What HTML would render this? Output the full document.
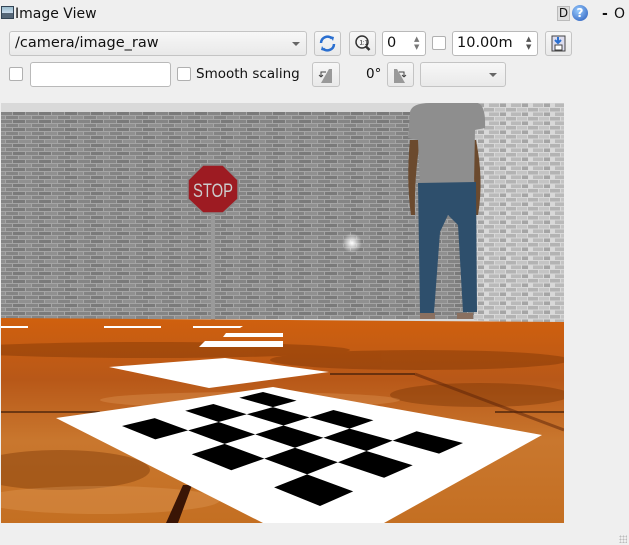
<!DOCTYPE html>
<html><head><meta charset="utf-8"><style>
body{margin:0;width:629px;height:545px;background:#efefef;font-family:"DejaVu Sans","Liberation Sans",sans-serif;position:relative;overflow:hidden;color:#111}
.a{position:absolute;box-sizing:border-box}
.btn{border:1px solid #c4c4c4;border-radius:3px;background:linear-gradient(#f7f7f7,#e9e9e9)}
.fld{border:1px solid #b9b9b9;border-radius:3px;background:#fff}
.cb{width:14px;height:14px;border:1px solid #b0b0b0;border-radius:2px;background:#fff}
.t{font-size:14px;line-height:18px;white-space:nowrap}
</style></head><body>
<div class="a" style="left:1px;top:6px;width:13px;height:13px;border:1px solid #345;background:linear-gradient(#9bc 0,#cde 55%,#567 56%)"></div>
<div class="a t" style="left:15px;top:5px;font-size:14px">Image View</div>
<div class="a" style="left:557px;top:6px;width:13px;height:15px;background:#ddd;border:1px solid #bbb;font-size:12px;line-height:13px;text-align:center">D</div>
<div class="a" style="left:572px;top:5px;width:16px;height:16px;border-radius:50%;background:radial-gradient(circle at 40% 35%,#9cf,#2457b8);color:#fff;font-size:12px;font-weight:bold;line-height:16px;text-align:center">?</div>
<div class="a t" style="left:602px;top:5px;font-size:14px;font-weight:bold">-</div>
<div class="a t" style="left:614px;top:5px;font-size:14px">O</div>
<div class="a btn" style="left:9px;top:31px;width:298px;height:25px"></div>
<div class="a t" style="left:15px;top:34px;font-size:14.5px">/camera/image_raw</div>
<div class="a" style="left:292px;top:42px;width:0;height:0;border-left:4px solid transparent;border-right:4px solid transparent;border-top:4px solid #666"></div>
<div class="a btn" style="left:314px;top:31px;width:27px;height:25px"><svg width="25" height="23"><path d="M6 11a6.5 6.5 0 0 1 11-4.5M19 12a6.5 6.5 0 0 1-11 4.5" fill="none" stroke="#2a6fd0" stroke-width="2.5"/><path d="M15 4l4 1-1 4zM10 19l-4-1 1-4z" fill="#2a6fd0"/></svg></div>
<div class="a btn" style="left:349px;top:31px;width:27px;height:25px"><svg width="25" height="23"><circle cx="12" cy="10" r="6" fill="#f4f4f4" stroke="#333" stroke-width="1.5"/><path d="M15.5 14l4 4" stroke="#333" stroke-width="2.5"/><text x="9.5" y="12.5" font-size="6" font-family="Liberation Sans">1:1</text></svg></div>
<div class="a fld" style="left:382px;top:31px;width:44px;height:25px"></div>
<div class="a t" style="left:387px;top:34px;font-size:14.5px">0</div>
<div class="a" style="left:414px;top:35px;font-size:7px;line-height:8px;color:#777">▲<br>▼</div>
<div class="a cb" style="left:432px;top:36px"></div>
<div class="a fld" style="left:452px;top:31px;width:86px;height:25px"></div>
<div class="a t" style="left:457px;top:34px;font-size:14.5px">10.00m</div>
<div class="a" style="left:526px;top:35px;font-size:7px;line-height:8px;color:#555">▲<br>▼</div>
<div class="a btn" style="left:545px;top:31px;width:27px;height:25px"><svg width="25" height="23"><rect x="6" y="4" width="13" height="15" fill="#dde" stroke="#444"/><rect x="9" y="13" width="7" height="5" fill="#fff" stroke="#444"/><path d="M12 5v6M9 8l3 3 3-3" stroke="#2a6fd0" stroke-width="2" fill="none"/></svg></div>
<div class="a cb" style="left:9px;top:67px"></div>
<div class="a fld" style="left:30px;top:62px;width:141px;height:25px"></div>
<div class="a cb" style="left:177px;top:67px"></div>
<div class="a t" style="left:196px;top:65px;font-size:13.5px">Smooth scaling</div>
<div class="a btn" style="left:312px;top:62px;width:28px;height:25px"><svg width="26" height="23"><path d="M8 20h11V6h-3z" fill="#999"/><path d="M13 9H8v5M8 14l-2-2M8 14l2-2" stroke="#444" fill="none"/></svg></div>
<div class="a t" style="left:366px;top:65px;font-size:13.5px">0°</div>
<div class="a btn" style="left:387px;top:62px;width:27px;height:25px"><svg width="25" height="23"><path d="M6 20h11L9 6H6z" fill="#999"/><path d="M11 9h5v5M16 14l-2-2M16 14l2-2" stroke="#444" fill="none"/></svg></div>
<div class="a btn" style="left:420px;top:62px;width:86px;height:25px"></div>
<div class="a" style="left:489px;top:73px;width:0;height:0;border-left:4px solid transparent;border-right:4px solid transparent;border-top:4px solid #666"></div>
<svg class="a" style="left:1px;top:103px" width="563" height="420" viewBox="1 103 563 420">
<defs>
<pattern id="br" width="26" height="8" patternUnits="userSpaceOnUse">
<rect width="26" height="8" fill="#a5a5a5"/><rect x="0" y="0" width="12" height="3" fill="#858585"/><rect x="13" y="0" width="12" height="3" fill="#7a7a7a"/><rect x="6" y="4" width="12" height="3" fill="#848484"/><rect x="19" y="4" width="7" height="3" fill="#909090"/><rect x="0" y="4" width="5" height="3" fill="#909090"/></pattern>
<pattern id="br2" width="22" height="9" patternUnits="userSpaceOnUse">
<rect width="22" height="9" fill="#d8d8d8"/><rect x="0" y="0" width="10" height="3.5" fill="#b3b3b3"/><rect x="11" y="0" width="10" height="3.5" fill="#c4c4c4"/><rect x="5" y="4.5" width="10" height="3.5" fill="#b9b9b9"/><rect x="16" y="4.5" width="6" height="3.5" fill="#a5a5a5"/></pattern>
<linearGradient id="fl" x1="0" y1="0" x2="0" y2="1"><stop offset="0" stop-color="#d0600e"/><stop offset=".3" stop-color="#b85818"/><stop offset=".6" stop-color="#c9772e"/><stop offset="1" stop-color="#c46f22"/></linearGradient>
<radialGradient id="gl"><stop offset="0" stop-color="#fff"/><stop offset="1" stop-color="#fff" stop-opacity="0"/></radialGradient>
</defs>
<rect x="1" y="103" width="563" height="420" fill="#d9d9d9"/>
<rect x="1" y="112" width="475" height="207" fill="url(#br)"/>
<polygon points="474,103 564,103 564,325 474,320" fill="url(#br2)"/>
<circle cx="352" cy="243" r="10" fill="url(#gl)"/>
<rect x="211" y="212" width="4" height="108" fill="#9a9a9a"/>
<polygon points="203,165 223,165 238,180 238,199 223,213 203,213 188,199 188,180" fill="#9d1b22" stroke="#888" stroke-width="1.5"/>
<text x="213" y="197" font-family="Liberation Sans" font-size="19" fill="#ccc" text-anchor="middle" textLength="40" lengthAdjust="spacingAndGlyphs">STOP</text>
<path d="M410 140 Q406 180 411 215 L415 215 Q414 180 420 140Z" fill="#6b4a2e"/>
<path d="M476 140 Q484 180 478 215 L474 215 Q476 180 470 140Z" fill="#6b4a2e"/>
<path d="M410 112 Q412 103 430 103 L478 103 Q486 106 485 128 L475 130 L474 185 L420 187 L418 140 L408 138Z" fill="#8e8e8e"/>
<path d="M418 183 L476 182 L477 312 L463 312 L458 225 L448 215 L440 232 L434 313 L420 313Z" fill="#2e4f6c"/>
<rect x="420" y="313" width="15" height="6" fill="#8a7060"/><rect x="457" y="313" width="16" height="6" fill="#8a7060"/>
<polygon points="1,318 564,322 564,523 1,523" fill="url(#fl)"/>
<g opacity=".35" fill="#6a2a00">
<ellipse cx="150" cy="350" rx="200" ry="8"/><ellipse cx="420" cy="360" rx="150" ry="10"/><ellipse cx="60" cy="470" rx="90" ry="20"/><ellipse cx="480" cy="395" rx="90" ry="12"/></g>
<g opacity=".25" fill="#f0b070"><ellipse cx="100" cy="500" rx="120" ry="14"/><ellipse cx="250" cy="400" rx="150" ry="8"/></g>
<path d="M1 412H100M495 412H564M330 374H415" stroke="#3a1a08" stroke-width="1.2"/>
<path d="M415 374 L564 430" stroke="#5a2208" stroke-width="3" opacity=".5"/>
<polygon points="183,485 192,485 178,523 166,523" fill="#3a1505"/>
<polygon points="1,326 28,326 28,328 1,328" fill="#fff"/>
<polygon points="104,326 161,326 161,328 104,328" fill="#fff"/>
<polygon points="193,326 243,326 240,328 193,328" fill="#fff"/>
<polygon points="226,333 283,333 283,337 223,337" fill="#fff"/>
<polygon points="205,341 283,341 283,347 199,347" fill="#fff"/>
<polygon points="109,367 225,358 329,372 209,388" fill="#fff"/>
<polygon points="56,418 273,387 542,435 384,523 263,523" fill="#fff"/>
<g id="ck"></g>
</svg>
<div class="a" style="left:619px;top:535px;width:8px;height:8px;background:radial-gradient(#bbb 1px,transparent 1px) 0 0/3px 3px"></div>
<script>
(function(){
var T=[263,392],R=[463,443],L=[122,426],B=[320,506],U=5,V=5,s='';
function P(u,v){u/=U;v/=V;u=u*(0.8+0.2*u);v=v*(0.8+0.2*v);return [(1-u)*(1-v)*T[0]+u*(1-v)*R[0]+(1-u)*v*L[0]+u*v*B[0],(1-u)*(1-v)*T[1]+u*(1-v)*R[1]+(1-u)*v*L[1]+u*v*B[1]];}
for(var i=0;i<U;i++)for(var j=0;j<V;j++){if((i+j)%2)continue;var p=[P(i,j),P(i+1,j),P(i+1,j+1),P(i,j+1)];
s+='<polygon fill="#000" points="'+p.map(function(q){return q[0].toFixed(1)+','+q[1].toFixed(1)}).join(' ')+'"/>';}
document.getElementById('ck').innerHTML=s;})();
</script>
</body></html>
